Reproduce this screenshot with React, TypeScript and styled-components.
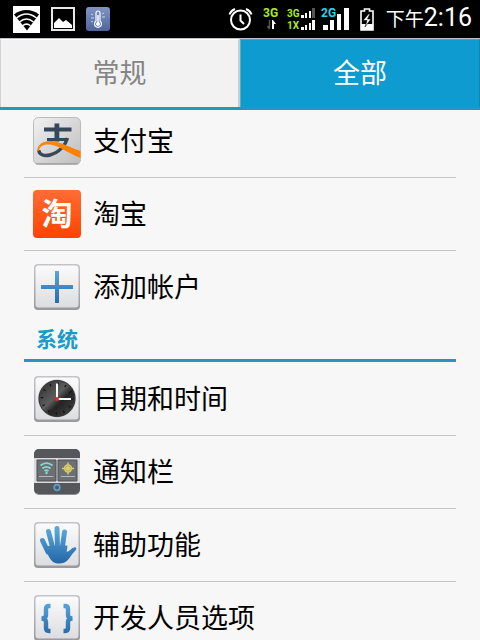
import React from "react";
import styled, { createGlobalStyle } from "styled-components";

const GlobalStyle = createGlobalStyle`
  * { box-sizing: border-box; }
  body {
    margin: 0;
    background: #f7f7f7;
    font-family: Roboto, "Noto Sans CJK SC", sans-serif;
  }
`;

const Screen = styled.div`
  display: flex;
  flex-direction: column;
  height: 100vh;
  overflow: hidden;
`;

const StatusBar = styled.header`
  display: flex;
  flex: none;
  align-items: center;
  justify-content: space-between;
  height: 38px;
  padding: 0 8px 0 13px;
  background: #000;
  color: #fff;
`;

const Notices = styled.div`
  display: flex;
  align-items: center;
  gap: 11px;
`;

const Signals = styled.div`
  display: flex;
  align-items: center;
  gap: 10px;

  svg {
    display: block;
    overflow: visible;
  }
`;

const Clock = styled.time`
  display: flex;
  align-items: baseline;
  margin-left: 2px;
  line-height: 38px;
  font-size: 25px;
`;

const Period = styled.span`
  font-size: 19px;
`;

const Tabs = styled.div`
  display: flex;
  flex: none;
  height: 72px;
  border-top: 1px solid #b9c3c7;
  border-bottom: 3px solid #2098bf;
  background: #f2f2f2;
`;

const Tab = styled.button<{ $active?: boolean }>`
  width: 50%;
  padding: 1px 0 0;
  border: 0;
  border-left: 1px solid ${(p) => (p.$active ? "#4fb0d2" : "#d2d2d2")};
  border-right: ${(p) => (p.$active ? "1px solid #0f86b4" : "2px solid #c9cdcf")};
  border-top: 1px solid ${(p) => (p.$active ? "#3fa5cb" : "#fff")};
  background: ${(p) => (p.$active ? "#0e9bd0" : "#f2f2f2")};
  color: ${(p) => (p.$active ? "#fff" : "#858585")};
  font: inherit;
  font-size: 27px;
  line-height: 40px;
`;

const Scroller = styled.main`
  flex: 1;
  min-height: 0;
  overflow-y: auto;
  scrollbar-width: none;
  padding: 0 24px;
`;

const List = styled.ul<{ $scrolled?: boolean }>`
  margin: ${(p) => (p.$scrolled ? "-5px" : "1px")} 0 0;
  padding: 0;
  list-style: none;
`;

const Item = styled.li`
  height: 73px;
  border-bottom: 1px solid #c6c6c6;

  &:last-child { border-bottom-color: transparent; }
`;

const Row = styled.button`
  display: flex;
  align-items: center;
  gap: 12px;
  width: 100%;
  height: 72px;
  padding: 0 9px;
  border: 0;
  background: none;
  color: #000;
  font: inherit;
  font-size: 27px;
  line-height: 40px;
  text-align: left;

  svg { flex: none; }
`;

const Label = styled.span`
  padding-top: 2px;
`;

const SectionTitle = styled.h2`
  height: 38px;
  margin: 0;
  padding-left: 12px;
  border-bottom: 3px solid #2098bf;
  color: #1b9bc9;
  font-size: 21px;
  font-weight: 700;
  line-height: 33px;
`;

function AppIcon({ children }: { children: React.ReactNode }) {
  return (
    <svg width="48" height="48" viewBox="0 0 48 48" aria-hidden="true">
      {children}
    </svg>
  );
}

const Hidden = styled.svg`
  position: absolute;
`;

function Defs() {
  return (
    <Hidden width="0" height="0" aria-hidden="true">
      <defs>
        <linearGradient id="tile" x1="0" y1="0" x2="0" y2="1">
          <stop offset="0" stopColor="#fbfbfb" />
          <stop offset="1" stopColor="#dcdde0" />
        </linearGradient>
        <linearGradient id="edge" x1="0" y1="0" x2="0" y2="1">
          <stop offset="0" stopColor="#c4c4c8" />
          <stop offset="1" stopColor="#98989d" />
        </linearGradient>
        <linearGradient id="silver" x1="0" y1="0" x2="1" y2="1">
          <stop offset="0" stopColor="#f1f1f1" />
          <stop offset="1" stopColor="#bdbdbd" />
        </linearGradient>
        <linearGradient id="blue" x1="0" y1="8" x2="0" y2="42" gradientUnits="userSpaceOnUse">
          <stop offset="0" stopColor="#5aa7da" />
          <stop offset="1" stopColor="#2467a7" />
        </linearGradient>
        <linearGradient id="orange" x1="0" y1="0" x2="0" y2="1">
          <stop offset="0" stopColor="#ff6c35" />
          <stop offset="1" stopColor="#ff4300" />
        </linearGradient>
        <linearGradient id="swoosh" x1="0" y1="0" x2="1" y2="0">
          <stop offset="0" stopColor="#f08a18" />
          <stop offset="1" stopColor="#ff7d00" />
        </linearGradient>
        <linearGradient id="dial" x1="0" y1="0" x2="1" y2="1">
          <stop offset="0" stopColor="#2a2a2a" />
          <stop offset="0.45" stopColor="#5d5d5d" />
          <stop offset="0.6" stopColor="#242424" />
          <stop offset="1" stopColor="#444" />
        </linearGradient>
        <linearGradient id="thermo" x1="0" y1="0" x2="0" y2="1">
          <stop offset="0" stopColor="#8194c2" />
          <stop offset="1" stopColor="#4d669f" />
        </linearGradient>
      </defs>
    </Hidden>
  );
}

const Tile = () => (
  <>
    <rect x="1" y="1" width="46" height="46" rx="4" fill="url(#edge)" />
    <rect x="2.500" y="2.500" width="43" height="42" rx="3" fill="url(#tile)" />
  </>
);

const AlipayIcon = () => (
  <AppIcon>
    <rect x="0.5" y="0.5" width="47" height="47" rx="5" fill="url(#silver)" stroke="#bbb" />
    <path d="M3 46.800h42" stroke="#999" />
    <path d="M11 10.500h27.500v4H11zM21.500 6.500h4.800v18h-4.800z" fill="#37485a" />
    <path d="M14 22.500h20.500" stroke="#37485a" strokeWidth="3" />
    <path d="M34.500 21c-2 7-8 14.500-17.500 17-6 1.500-11.500-.5-11-5" fill="none" stroke="#37485a" strokeWidth="3.400" />
    <path
      d="M4.200 33.500c.3-7 8-10.800 16-9.300C30 26 38 31 47.500 34v7C36 37 26.500 29 17 27.600c-6-.8-10.500 1.400-11 6.400z"
      fill="url(#swoosh)"
    />
  </AppIcon>
);

const TaobaoIcon = () => (
  <AppIcon>
    <rect width="48" height="48" rx="4" fill="url(#orange)" />
    <text
      x="24"
      y="35"
      textAnchor="middle"
      fill="#fff"
      fontFamily="Noto Sans CJK SC, sans-serif"
      fontSize="31"
      fontWeight="700"
    >
      淘
    </text>
  </AppIcon>
);

const AddIcon = () => (
  <AppIcon>
    <Tile />
    <path d="M22 8h4v14h14v4H26v14h-4V26H8v-4h14z" fill="url(#blue)" />
  </AppIcon>
);

const ClockIcon = () => (
  <AppIcon>
    <Tile />
    <circle cx="24" cy="23.500" r="19" fill="#b9b9b9" />
    <circle cx="24" cy="23.500" r="18" fill="url(#dial)" stroke="#333" />
    <circle cx="24" cy="23.500" r="15" fill="none" stroke="#111" strokeWidth="2.500" strokeDasharray="1.200 6.654" />
    <path d="M24 24V8.500M24 24h14" stroke="#fff" strokeWidth="2" />
    <circle cx="24" cy="24" r="2" fill="#e02c2c" />
  </AppIcon>
);

const PanelIcon = () => (
  <AppIcon>
    <rect x="1" y="1" width="46" height="46" rx="5" fill="#8d8f92" />
    <rect x="1" y="1" width="46" height="45" rx="5" fill="#55575b" />
    <path d="M1 10h46v25H1z" fill="#dadadc" />
    <path d="M4 12h19v21H4zM25 12h19v21H25z" fill="#6c6f73" stroke="#4d5054" />
    <path d="M6 28.500h14.500M28 28.500h14" stroke="#b4b7ba" />
    <g fill="none" stroke="#8bd7d0" strokeWidth="1.800">
      <path d="M7.500 17.500q6-4.600 12 0M9.500 20.500q4-3.200 8 0M11.500 23q2-1.600 4 0" />
    </g>
    <circle cx="13.500" cy="25" r="1.200" fill="#8bd7d0" />
    <path d="M29 20.500h12M35 14.500v12" stroke="#dcd168" strokeWidth="1.400" />
    <circle cx="35" cy="20.500" r="4.200" fill="#dcd168" />
    <circle cx="35" cy="20.500" r="2.600" fill="none" stroke="#a8a058" strokeWidth="0.700" />
    <circle cx="24" cy="39.500" r="2.800" fill="none" stroke="#5f9dcc" strokeWidth="1.800" />
  </AppIcon>
);

const HandIcon = () => (
  <AppIcon>
    <Tile />
    <g fill="none" stroke="url(#blue)" strokeWidth="5" strokeLinecap="round">
      <path d="M9.500 19.500 15 31M15.500 10.500 20 28M24 7.500l.5 20M31.500 11 29 29" />
    </g>
    <path
      d="M11 25l23.500-.5-.8 6.500c3-1 5-4.400 8-4.800 2 0 2.200 1.800.8 3.200-4 3.600-6.500 10-11 12-4 1.800-9.500 1.500-12.500-1.500-3.600-3.600-5.400-9.900-8-14.900z"
      fill="url(#blue)"
    />
  </AppIcon>
);

const BracesIcon = () => (
  <AppIcon>
    <Tile />
    <g fill="none" stroke="url(#blue)" strokeWidth="4.400">
      <path d="M17.500 12H16c-2 0-3 1-3 3v6c0 2-1.500 3.500-4.500 3.500 3 0 4.500 1.500 4.500 3.500v6c0 2 1 3 3 3h1.500" />
      <path d="M30.500 12H32c2 0 3 1 3 3v6c0 2 1.500 3.500 4.500 3.500-3 0-4.500 1.500-4.500 3.500v6c0 2-1 3-3 3h-1.500" />
    </g>
  </AppIcon>
);

const WifiNotice = () => (
  <svg width="27" height="27" viewBox="0 0 27 27" aria-hidden="true">
    <path d="M0 0h27v27H0z" fill="#fff" />
    <path d="M1 8.500C8 2.500 19 2.500 26 8.500L14 24.500z" fill="#000" />
    <g fill="none" stroke="#fff" strokeWidth="1.500">
      <path d="M3.500 12q10-8 20 0M6.500 16q7-6 14 0M9.500 19.800q4-3.400 8 0" />
    </g>
  </svg>
);

const PictureNotice = () => (
  <svg width="24" height="24" viewBox="0 0 24 24" aria-hidden="true">
    <path d="M1 1h22v22H1z" fill="#000" stroke="#e8e8e8" strokeWidth="2" />
    <path d="M3 21v-5l5-5 4 4 3-2 6 5v3z" fill="#fff" />
  </svg>
);

const ThermoNotice = () => (
  <svg width="24" height="24" viewBox="0 0 24 24" aria-hidden="true">
    <rect width="24" height="24" rx="3" fill="url(#thermo)" />
    <path d="M10 14V6a2 2 0 0 1 4 0v8a3.500 3.500 0 1 1-4 0z" fill="none" stroke="#fff" strokeWidth="1.200" />
    <path d="M12 8v9" stroke="#fff" strokeWidth="1.500" />
    <circle cx="12" cy="17" r="2" fill="#fff" />
    <path d="M5 7l2 1M5 11h3M5 15l2-1M16 7l2-1M16 10h3" stroke="#c8d2ec" />
  </svg>
);

const AlarmIcon = () => (
  <svg width="25" height="24" viewBox="0 0 25 24" fill="none" stroke="#fff" strokeWidth="2" aria-hidden="true">
    <circle cx="12.500" cy="13" r="9.500" />
    <path d="M12.500 7.500v6l3.500 3.500M1.500 7.500Q3 3.500 7 2M23.500 7.500Q22 3.500 18 2" />
  </svg>
);

const SignalIcons = () => (
  <svg width="87" height="26" viewBox="0 0 87 26" fontFamily="Roboto, sans-serif" fontSize="12" fontWeight="700" role="img" aria-label="3G 3G 1X 2G">
    <text x="0" y="11" fill="#a8ea20">3G</text>
    <path d="M6.500 14v9M4.500 20l2 3" stroke="#555" strokeWidth="1.500" fill="none" />
    <path d="M9 23v-9h1l3 4h-2v5z" fill="#fff" />
    <g fontSize="10">
      <text x="24" y="11" fill="#a8ea20">3G</text>
      <text x="24" y="23" fill="#a8ea20">1X</text>
    </g>
    <path d="M38 9h3v3h-3zM42 7h2v5h-2zM46 5h2v7h-2z" fill="#fff" />
    <path d="M49 2h3v10h-3z" fill="#555" />
    <path d="M38 21h3v3h-3zM42 19h2v5h-2zM46 17h2v7h-2zM49 14h3v10h-3z" fill="#fff" />
    <text x="58" y="11" fill="#27d5e8">2G</text>
    <path d="M60 19h5v5h-5zM67 14h4v10h-4zM74 8h4v16h-4zM81 2h5v22h-5z" fill="#fff" />
  </svg>
);

const BatteryIcon = () => (
  <svg width="14" height="23" viewBox="0 0 14 23" aria-hidden="true">
    <path d="M4.500 3V1h5v2H13v19H1V3z" fill="none" stroke="#fff" strokeWidth="1.600" />
    <path d="M1 16h12v6H1z" fill="#fff" />
    <path d="M8.500 6 3 12.500h4L5 19l6-8H7.500L10 6z" fill="#fff" stroke="#000" strokeWidth="0.600" />
  </svg>
);

const accounts = [
  { label: "支付宝", Icon: AlipayIcon },
  { label: "淘宝", Icon: TaobaoIcon },
  { label: "添加帐户", Icon: AddIcon },
];

const system = [
  { label: "日期和时间", Icon: ClockIcon },
  { label: "通知栏", Icon: PanelIcon },
  { label: "辅助功能", Icon: HandIcon },
  { label: "开发人员选项", Icon: BracesIcon },
];

function SettingsList({ items, scrolled }: { items: typeof accounts; scrolled?: boolean }) {
  return (
    <List $scrolled={scrolled}>
      {items.map(({ label, Icon }) => (
        <Item key={label}>
          <Row type="button">
            <Icon />
            <Label>{label}</Label>
          </Row>
        </Item>
      ))}
    </List>
  );
}

export default function App() {
  return (
    <Screen lang="zh-CN">
      <GlobalStyle />
      <Defs />
      <StatusBar>
        <Notices>
          <WifiNotice />
          <PictureNotice />
          <ThermoNotice />
        </Notices>
        <Signals>
          <AlarmIcon />
          <SignalIcons />
          <BatteryIcon />
          <Clock>
            <Period>下午</Period>2:16
          </Clock>
        </Signals>
      </StatusBar>
      <Tabs role="tablist">
        <Tab type="button" role="tab" aria-selected={false}>常规</Tab>
        <Tab type="button" role="tab" aria-selected $active>全部</Tab>
      </Tabs>
      <Scroller>
        <SettingsList items={accounts} scrolled />
        <SectionTitle>系统</SectionTitle>
        <SettingsList items={system} />
      </Scroller>
    </Screen>
  );
}
